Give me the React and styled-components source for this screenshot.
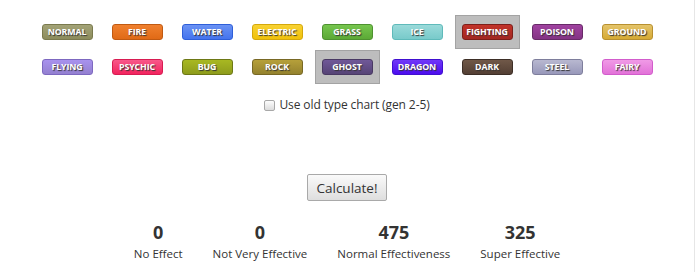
import React, { useState } from "react";
import styled, { createGlobalStyle } from "styled-components";

const GlobalStyle = createGlobalStyle`
    html, body {
        margin: 0;
        padding: 0;
        background: #fff;
    }
    body {
        font-family: "Open Sans", "Noto Sans", sans-serif;
        color: #333;
    }
`;

const Page = styled.div`
    width: 695px;
    height: 272px;
    box-sizing: border-box;
    border-right: 1px solid #e6e6e6;
    padding-top: 15px;
    display: flex;
    flex-direction: column;
    align-items: center;
    overflow: hidden;
`;

const TypeGrid = styled.div`
    display: grid;
    grid-template-columns: repeat(9, 65px);
    grid-auto-rows: 34px;
    column-gap: 5px;
    row-gap: 1px;
`;

const TypeCell = styled.div`
    display: flex;
    align-items: center;
    justify-content: center;
    box-sizing: border-box;
    border: 1px solid ${(p) => (p.$selected ? "#a3a3a3" : "transparent")};
    background: ${(p) => (p.$selected ? "#bdbdbd" : "transparent")};
    cursor: pointer;
`;

const TypeBadge = styled.span`
    box-sizing: border-box;
    width: 51px;
    height: 16px;
    border: 1px solid ${(p) => p.$border};
    border-radius: 3px;
    background: linear-gradient(${(p) => p.$top}, ${(p) => p.$bottom});
    color: #fff;
    font-family: "Open Sans", sans-serif;
    font-weight: 700;
    font-size: 8.8px;
    line-height: 14px;
    text-align: center;
    white-space: nowrap;
    letter-spacing: -0.1px;
    text-shadow: 1px 1px 1px #333;
`;

const OptionRow = styled.label`
    margin-top: 12px;
    display: flex;
    align-items: center;
    gap: 4px;
    font-size: 12px;
    line-height: 18px;
    letter-spacing: -0.1px;
    color: #333;
    cursor: pointer;
`;

const CheckBox = styled.input`
    appearance: none;
    margin: 0;
    width: 11px;
    height: 11px;
    border: 1px solid #a8a8a8;
    border-radius: 2px;
    background: linear-gradient(#fdfdfd, #dcdcdc);
    &:checked {
        background: linear-gradient(#8ab4f0, #4a7fd8);
    }
`;

const CalcButton = styled.button`
    margin-top: 60px;
    width: 80px;
    height: 27px;
    border: 1px solid #a9a9a9;
    border-radius: 2px;
    background: linear-gradient(#fafafa, #dedede);
    font-family: "Open Sans", sans-serif;
    font-size: 13.5px;
    color: #333;
    padding: 0;
    cursor: pointer;
`;

const StatsRow = styled.div`
    margin-top: 19px;
    display: flex;
    gap: 30px;
`;

const Stat = styled.div`
    display: flex;
    flex-direction: column;
    align-items: center;
`;

const StatNumber = styled.div`
    font-size: 18px;
    font-weight: 700;
    line-height: 24px;
    color: #333;
`;

const StatLabel = styled.div`
    font-size: 11.5px;
    line-height: 20px;
    color: #333;
`;

const types = [
    { name: "NORMAL", top: "#a3a377", bottom: "#8c8c5c", border: "#7a7a4e" },
    { name: "FIRE", top: "#f0802e", bottom: "#e06a16", border: "#c05a12" },
    { name: "WATER", top: "#6a92f4", bottom: "#4474ee", border: "#2f5fd8" },
    { name: "ELECTRIC", top: "#f8d232", bottom: "#f0c10a", border: "#d4a80c" },
    { name: "GRASS", top: "#76c64e", bottom: "#5ca936", border: "#4e9230" },
    { name: "ICE", top: "#9adada", bottom: "#78caca", border: "#5fbaba" },
    { name: "FIGHTING", top: "#c23228", bottom: "#a22822", border: "#7d1f1a" },
    { name: "POISON", top: "#a042a0", bottom: "#843484", border: "#682a68" },
    { name: "GROUND", top: "#e4c46a", bottom: "#d6aa34", border: "#b89030" },
    { name: "FLYING", top: "#a892ee", bottom: "#9380d0", border: "#7d68c0" },
    { name: "PSYCHIC", top: "#f8588a", bottom: "#f2245e", border: "#d81c52" },
    { name: "BUG", top: "#a8b822", bottom: "#8e9c1c", border: "#6d7815" },
    { name: "ROCK", top: "#b6a03a", bottom: "#94822e", border: "#786824" },
    { name: "GHOST", top: "#705898", bottom: "#564476", border: "#493963" },
    { name: "DRAGON", top: "#7038f8", bottom: "#4c0cee", border: "#4010d0" },
    { name: "DARK", top: "#705848", bottom: "#533f34", border: "#3d2e26" },
    { name: "STEEL", top: "#b8b8d0", bottom: "#9898ba", border: "#7e7e9c" },
    { name: "FAIRY", top: "#f09ae6", bottom: "#e272d8", border: "#d25ccc" },
];

const stats = [
    { value: 0, label: "No Effect" },
    { value: 0, label: "Not Very Effective" },
    { value: 475, label: "Normal Effectiveness" },
    { value: 325, label: "Super Effective" },
];

function App() {
    const [selected, setSelected] = useState(["FIGHTING", "GHOST"]);
    const [oldChart, setOldChart] = useState(false);

    const toggleType = (name) => {
        setSelected((prev) =>
            prev.includes(name) ? prev.filter((t) => t !== name) : [...prev, name]
        );
    };

    return (
        <>
            <GlobalStyle />
            <Page>
                <TypeGrid>
                    {types.map((t) => (
                        <TypeCell
                            key={t.name}
                            $selected={selected.includes(t.name)}
                            onClick={() => toggleType(t.name)}
                        >
                            <TypeBadge $top={t.top} $bottom={t.bottom} $border={t.border}>
                                {t.name}
                            </TypeBadge>
                        </TypeCell>
                    ))}
                </TypeGrid>

                <OptionRow>
                    <CheckBox
                        type="checkbox"
                        checked={oldChart}
                        onChange={(e) => setOldChart(e.target.checked)}
                    />
                    Use old type chart (gen 2-5)
                </OptionRow>

                <CalcButton>Calculate!</CalcButton>

                <StatsRow>
                    {stats.map((s) => (
                        <Stat key={s.label}>
                            <StatNumber>{s.value}</StatNumber>
                            <StatLabel>{s.label}</StatLabel>
                        </Stat>
                    ))}
                </StatsRow>
            </Page>
        </>
    );
}

export default App;
